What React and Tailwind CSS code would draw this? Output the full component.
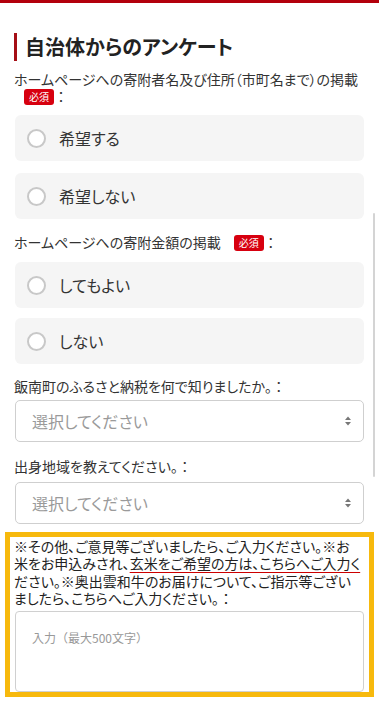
const font = { fontFamily: '"Noto Sans CJK JP", "Noto Sans", sans-serif' };

function Badge() {
  return (
    <span className="ml-[10px] inline-block rounded-[3px] bg-[#d7000f] px-[5px] align-[1px] text-[10px] leading-[16px] text-white">
      必須
    </span>
  );
}

function Colon() {
  return <span className="[font-feature-settings:normal]">：</span>;
}

function RadioRow({ label, className = '' }) {
  return (
    <label className={`flex h-[46px] items-center rounded-[6px] bg-[#f5f5f5] pl-[12px] ${className}`}>
      <span className="h-[19px] w-[19px] shrink-0 rounded-full border-2 border-[#c8c8c8] bg-white" />
      <span className="ml-[13px] text-[16px] text-[#333]">{label}</span>
    </label>
  );
}

function SelectBox({ className = '' }) {
  return (
    <div className={`flex h-[42px] items-center justify-between rounded-[5px] border border-[#cfcfcf] bg-white pl-[16px] pr-[10px] ${className}`}>
      <span className="text-[16px] text-[#9a9a9a]">選択してください</span>
      <svg width="8" height="12" viewBox="0 0 8 12" className="mr-[1px]">
        <path d="M4 1.5 L7 5 L1 5 Z" fill="#777" />
        <path d="M4 10.5 L7 7 L1 7 Z" fill="#777" />
      </svg>
    </div>
  );
}

export default function App() {
  return (
    <div className="relative min-h-[704px] bg-white [font-feature-settings:'palt']" style={font}>
      <div className="h-[3px] bg-[#b3000c]" />

      <div className="px-[15px] pt-[30px]">
        <h2 className="flex items-center">
          <span className="-ml-[1px] h-[28px] w-[3px] bg-[#a50f16]" />
          <span className="ml-[8px] text-[20px] font-bold leading-[28px] text-[#222]">
            自治体からのアンケート
          </span>
        </h2>

        <p className="mt-[10px] text-[14px] leading-[17px] text-[#333] -ml-[1px]">
          ホームページへの寄附者名及び住所（市町名まで）の掲載 <Badge /><Colon />
        </p>
        <RadioRow label="希望する" className="mt-[10px]" />
        <RadioRow label="希望しない" className="mt-[12px]" />

        <p className="mt-[15px] text-[14px] leading-[17px] text-[#333] -ml-[1px]">
          ホームページへの寄附金額の掲載 <Badge /><Colon />
        </p>
        <RadioRow label="してもよい" className="mt-[11px]" />
        <RadioRow label="しない" className="mt-[10px]" />

        <p className="mt-[14px] text-[14px] leading-[17px] text-[#333] -ml-[1px]">
          飯南町のふるさと納税を何で知りましたか。<Colon />
        </p>
        <SelectBox className="mt-[5px]" />

        <p className="mt-[16px] text-[14px] leading-[17px] text-[#333] -ml-[1px]">
          出身地域を教えてください。<Colon />
        </p>
        <SelectBox className="mt-[7px]" />
      </div>

      <div className="mx-[5px] mt-[8px] border-[5px] border-[#f7b90d] px-[5px] pt-[1px]">
        <p className="-ml-[1px] text-[14px] leading-[17.3px] text-[#222]">
          ※その他、ご意見等ございましたら、ご入力ください。※お
          <br />
          米をお申込みされ、
          <span className="underline decoration-[#cc0000] decoration-1 underline-offset-[3px]">
            玄米をご希望の方は、こちらへご入力く
          </span>
          <br />
          ださい。※奥出雲和牛のお届けについて、ご指示等ござい
          <br />
          ましたら、こちらへご入力ください。<Colon />
        </p>
        <div className="mt-[4px] h-[81px] rounded-[4px] border border-[#d0d0d0] bg-white px-[16px] pt-[12px]">
          <span className="text-[12px] text-[#999] [font-feature-settings:normal]">入力（最大500文字）</span>
        </div>
      </div>

      <div className="absolute right-[4px] top-[213px] h-[264px] w-[2px] rounded-full bg-[#d4d4d4]" />
    </div>
  );
}
